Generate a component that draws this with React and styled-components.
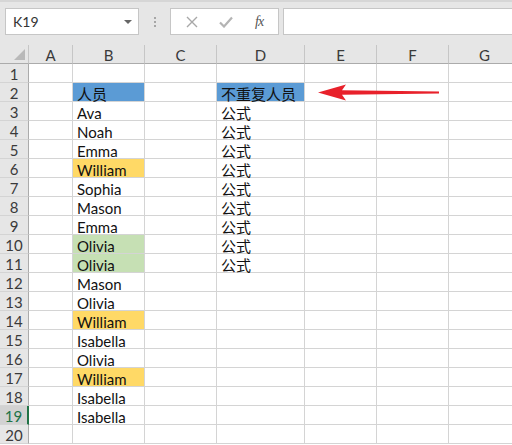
import React from 'react'
import styled, { createGlobalStyle } from 'styled-components'

const GlobalStyle = createGlobalStyle`
  html, body {
    margin: 0;
    padding: 0;
    background: #ffffff;
    overflow: hidden;
  }
  body {
    font-family: Lato, "Noto Sans CJK SC", sans-serif;
  }
`

const COLS = [
  { name: 'A', width: 44 },
  { name: 'B', width: 72 },
  { name: 'C', width: 72 },
  { name: 'D', width: 88 },
  { name: 'E', width: 72 },
  { name: 'F', width: 72 },
  { name: 'G', width: 72 },
]

const YELLOW = '#ffd966'
const GREEN = '#c6e0b4'
const BLUE = '#5b9bd5'

const names = [
  ['Ava'], ['Noah'], ['Emma'], ['William', YELLOW], ['Sophia'], ['Mason'], ['Emma'],
  ['Olivia', GREEN], ['Olivia', GREEN], ['Mason'], ['Olivia'], ['William', YELLOW],
  ['Isabella'], ['Olivia'], ['William', YELLOW], ['Isabella'], ['Isabella'],
]

// row number -> { columnName: { text, fill } }
const buildCells = () => {
  const cells = {}
  cells[2] = { B: { text: '人员', fill: BLUE }, D: { text: '不重复人员', fill: BLUE } }
  names.forEach(([text, fill], i) => {
    const row = i + 3
    cells[row] = { B: { text, fill } }
    if (row <= 11) cells[row].D = { text: '公式' }
  })
  return cells
}

const Screen = styled.div`
  width: 512px;
  height: 445px;
  background: #e6e6e6;
  overflow: hidden;
  display: flex;
  flex-direction: column;
`

const Toolbar = styled.div`
  height: 45px;
  display: flex;
  align-items: flex-start;
  box-sizing: border-box;
  border-top: 2px solid #d6d6d6;
  padding-top: 6px;
`

const NameBox = styled.div`
  margin-left: 5px;
  width: 134px;
  height: 27px;
  box-sizing: border-box;
  background: #fff;
  border: 1px solid #c6c6c6;
  display: flex;
  align-items: center;
  justify-content: space-between;
  padding: 0 6px 0 7px;
  font-family: Lato, "Noto Sans", sans-serif;
  font-size: 14px;
  color: #333;
`

const Caret = styled.span`
  width: 0;
  height: 0;
  border-left: 4px solid transparent;
  border-right: 4px solid transparent;
  border-top: 4px solid #666;
`

const Dots = styled.div`
  width: 31px;
  height: 27px;
  display: flex;
  flex-direction: column;
  align-items: center;
  justify-content: center;
  gap: 2px;
  span {
    width: 2px;
    height: 2px;
    background: #a6a6a6;
  }
`

const FxBox = styled.div`
  width: 109px;
  height: 27px;
  box-sizing: border-box;
  background: #fff;
  border: 1px solid #c6c6c6;
  display: flex;
  align-items: center;
  justify-content: space-around;
  padding: 0 4px;
`

const FxLabel = styled.span`
  font-family: "Liberation Serif", serif;
  font-style: italic;
  font-size: 14px;
  color: #555;
  letter-spacing: -1px;
`

const FormulaInput = styled.div`
  margin-left: 4px;
  flex: 1;
  height: 27px;
  box-sizing: border-box;
  background: #fff;
  border: 1px solid #c6c6c6;
  border-right: none;
`

const Sheet = styled.div`
  position: relative;
  flex: 1;
  display: grid;
  grid-template-columns: 29px ${COLS.map((c) => `${c.width}px`).join(' ')};
  grid-auto-rows: 19px;
  background: #fff;
`

const Corner = styled.div`
  background: #e6e6e6;
  border-right: 1px solid #c6c6c6;
  border-bottom: 1px solid #ababab;
  box-sizing: border-box;
  position: relative;
  &::after {
    content: '';
    position: absolute;
    right: 3px;
    bottom: 3px;
    width: 0;
    height: 0;
    border-left: 11px solid transparent;
    border-bottom: 11px solid #b9b9b9;
  }
`

const ColHead = styled.div`
  background: #e6e6e6;
  border-right: 1px solid #c6c6c6;
  border-bottom: 1px solid #ababab;
  box-sizing: border-box;
  text-align: center;
  padding-top: 1px;
  font-family: Lato, "Noto Sans", sans-serif;
  font-size: 15px;
  line-height: 18px;
  color: #3a3a3a;
`

const RowHead = styled.div`
  background: ${(p) => (p.$active ? '#d2d2d2' : '#e6e6e6')};
  border-right: ${(p) => (p.$active ? '2px solid #217346' : '1px solid #ababab')};
  border-bottom: 1px solid #d4d4d4;
  box-sizing: border-box;
  text-align: center;
  padding-top: 1px;
  font-family: Lato, "Noto Sans", sans-serif;
  font-size: 15px;
  line-height: 18px;
  color: ${(p) => (p.$active ? '#217346' : '#3a3a3a')};
`

const Cell = styled.div`
  background: ${(p) => p.$fill || '#fff'};
  border-right: 1px solid #d4d4d4;
  border-bottom: 1px solid #d4d4d4;
  box-sizing: border-box;
  padding: 2px 0 0 4px;
  font-family: Lato, "Noto Sans CJK SC", sans-serif;
  font-size: 15px;
  line-height: 18px;
  color: #111;
  white-space: nowrap;
`

const Arrow = styled.svg`
  position: absolute;
  left: 315px;
  top: 39px;
`

const XIcon = () => (
  <svg width="12" height="12" viewBox="0 0 12 12">
    <path d="M1 1L11 11M11 1L1 11" stroke="#a8a8a8" strokeWidth="1.4" fill="none" />
  </svg>
)

const CheckIcon = () => (
  <svg width="14" height="12" viewBox="0 0 14 12">
    <path d="M1 6.5L5 10.5L13 1.5" stroke="#b4b4b4" strokeWidth="2.2" fill="none" />
  </svg>
)

export default function App() {
  const cells = buildCells()
  const rows = Array.from({ length: 20 }, (_, i) => i + 1)

  return (
    <Screen>
      <GlobalStyle />
      <Toolbar>
        <NameBox>
          K19
          <Caret />
        </NameBox>
        <Dots><span /><span /><span /></Dots>
        <FxBox>
          <XIcon />
          <CheckIcon />
          <FxLabel>fx</FxLabel>
        </FxBox>
        <FormulaInput />
      </Toolbar>
      <Sheet>
        <Corner />
        {COLS.map((c) => <ColHead key={c.name}>{c.name}</ColHead>)}
        {rows.map((r) => (
          <React.Fragment key={r}>
            <RowHead $active={r === 19}>{r}</RowHead>
            {COLS.map((c) => {
              const cell = (cells[r] || {})[c.name]
              return <Cell key={c.name} $fill={cell && cell.fill}>{cell ? cell.text : ''}</Cell>
            })}
          </React.Fragment>
        ))}
        <Arrow width="130" height="17" viewBox="0 0 130 17">
          <path d="M3 8.5 L31 0.5 L27 6.3 L124 7.5 L124 9.5 L27 10.7 L31 16.5 Z" fill="#e8212b" />
        </Arrow>
      </Sheet>
    </Screen>
  )
}
